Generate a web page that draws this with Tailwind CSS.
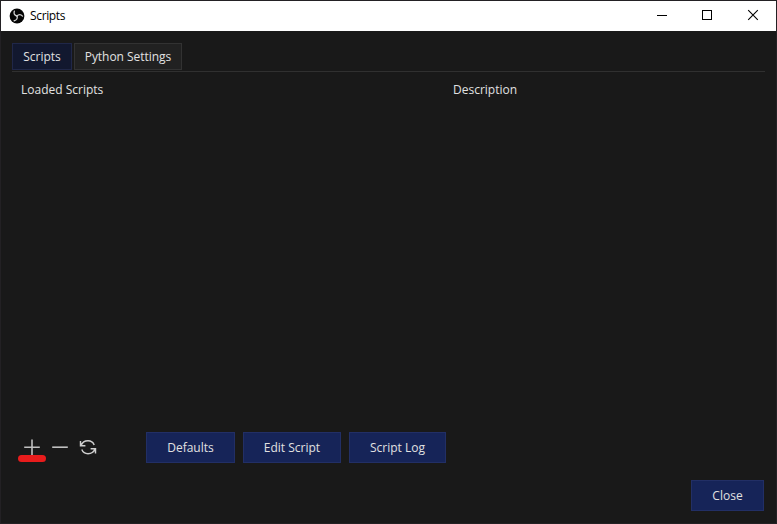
<!DOCTYPE html>
<html lang="en">
<head>
<meta charset="utf-8">
<title>Scripts</title>
<script src="https://cdn.jsdelivr.net/npm/@tailwindcss/browser@4"></script>
</head>
<body class="bg-[#191919]">
<div class="relative flex h-[524px] w-[777px] flex-col overflow-hidden border border-[#232124] bg-[#191919] font-['Open_Sans',sans-serif] text-[12px] leading-4 text-[#e1e1e1]">
  <header class="flex h-[30px] shrink-0 items-center bg-white text-black">
    <svg class="mb-px ml-2 size-4" viewBox="0 0 16 16" fill="none">
      <circle cx="8" cy="8" r="7.4" fill="#050505"/>
      <g stroke="#d0d0d0" stroke-width="1.3" stroke-linecap="round">
        <path d="M8 8C5.6 7.6 4.5 5.6 5.3 3.2"/>
        <path d="M8 8C5.6 7.6 4.5 5.6 5.3 3.2" transform="rotate(120 8 8)"/>
        <path d="M8 8C5.6 7.6 4.5 5.6 5.3 3.2" transform="rotate(240 8 8)"/>
      </g>
    </svg>
    <h1 class="ml-[5px] flex-1 tracking-[-0.35px]">Scripts</h1>
    <div class="-mr-0.5 flex" aria-label="Window controls">
      <svg class="h-[30px] w-[46px]" viewBox="0 0 46 30" fill="none" stroke="#000" shape-rendering="crispEdges"><path d="M17 14.5h10"/></svg>
      <svg class="h-[30px] w-[46px]" viewBox="0 0 46 30" fill="none" stroke="#000" shape-rendering="crispEdges"><path d="M16.5 9.5h9v9h-9z"/></svg>
      <svg class="h-[30px] w-[46px]" viewBox="0 0 46 30" fill="none" stroke="#000" stroke-width="1.1"><path d="M16.2 9.2l9.6 9.6M25.8 9.2l-9.6 9.6"/></svg>
    </div>
  </header>
  <div class="absolute -right-px top-[28px] h-[30px] w-px bg-[#777]"></div>

  <main class="flex flex-1 flex-col pl-[11px] pr-[11px] pt-3">
    <nav class="flex h-[28px] gap-0.5">
      <button class="flex h-[27px] w-[60px] items-center justify-center border border-[#202748] bg-[#12182f]">Scripts</button>
      <button class="flex h-[27px] w-[108px] items-center justify-center border border-[#323232] bg-[#212121] tracking-[-0.03px]">Python Settings</button>
    </nav>
    <section class="flex flex-1 border-t border-[#303030] pl-[9px] pt-[10px]">
      <h2 class="w-[432px]">Loaded Scripts</h2>
      <h2>Description</h2>
    </section>
    <div class="flex h-[31px] items-center">
      <div class="flex w-[134px] gap-1 pl-2">
        <button class="relative size-6" aria-label="Add">
          <svg class="size-6" viewBox="0 0 24 24" fill="none" stroke="#c0c0c0" stroke-width="1.6"><path d="M4.2 11.2h15.6M12 3.4v15.6"/></svg>
          <span class="absolute -left-[2.5px] top-[19.5px] h-[7px] w-7 rounded-full bg-[#e81c1c]"></span>
        </button>
        <button class="size-6" aria-label="Remove">
          <svg class="size-6" viewBox="0 0 24 24" fill="none" stroke="#c0c0c0" stroke-width="1.6"><path d="M4.2 11.2h15.6"/></svg>
        </button>
        <button class="size-6" aria-label="Reload">
          <svg class="size-6" viewBox="0 0 24 24" fill="none" stroke="#cfcfcf" stroke-width="1.45">
            <path d="M4.5 5v4.7h4.9M5 9.4C6.2 6.4 8.7 4.7 12 4.7c3 0 5.2 1.7 6.2 4.2"/>
            <path d="M19.5 17.4v-4.7h-4.9M19 13c-1.2 3-3.7 4.7-7 4.7-3 0-5.2-1.7-6.2-4.2"/>
          </svg>
        </button>
      </div>
      <div class="flex gap-2">
        <button class="h-[31px] w-[89px] border border-[#222f65] bg-[#162458]">Defaults</button>
        <button class="h-[31px] w-[98px] border border-[#222f65] bg-[#162458]">Edit Script</button>
        <button class="h-[31px] w-[97px] border border-[#222f65] bg-[#162458]">Script Log</button>
      </div>
    </div>
    <footer class="mb-3 mt-[17px] flex justify-end pr-px">
      <button class="h-[31px] w-[73px] border border-[#222f65] bg-[#162458]">Close</button>
    </footer>
  </main>
</div>
</body>
</html>
